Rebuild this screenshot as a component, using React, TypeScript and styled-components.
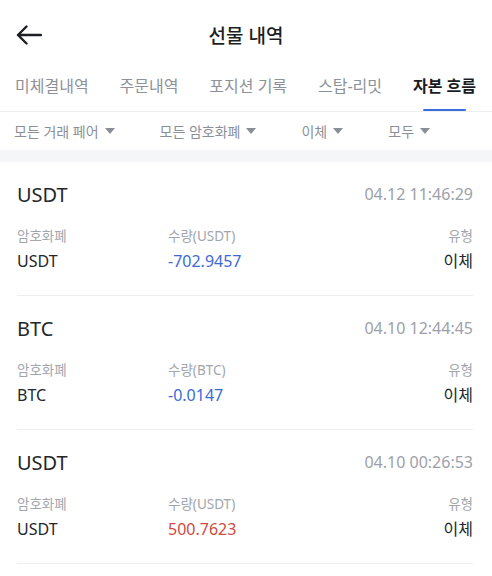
import React from 'react';
import styled, { createGlobalStyle } from 'styled-components';

const GlobalStyle = createGlobalStyle`
    body {
        margin: 0;
        background: #ffffff;
        font-family: "Noto Sans", "Noto Sans CJK KR", sans-serif;
    }
`;

const Page = styled.div`
    width: 492px;
    min-height: 576px;
    background: #ffffff;
`;

const Header = styled.div`
    position: relative;
    height: 70px;
    display: flex;
    align-items: center;
    justify-content: center;
`;

const BackButton = styled.div`
    position: absolute;
    left: 16px;
    top: 23px;
    width: 28px;
    height: 24px;
    display: flex;
    align-items: center;
`;

const Title = styled.div`
    font-size: 19px;
    color: #1c1f23;
    font-weight: 500;
`;

const Tabs = styled.div`
    height: 41px;
    display: flex;
    justify-content: space-between;
    padding: 0 16px 0 15px;
    border-bottom: 1px solid #eeeff1;
`;

const Tab = styled.div<{ $active?: boolean }>`
    position: relative;
    font-size: 16px;
    line-height: 20px;
    padding-top: 6px;
    color: ${(p) => (p.$active ? '#1a1c1f' : '#8d929a')};
    font-weight: ${(p) => (p.$active ? 700 : 400)};
    white-space: nowrap;

    &::after {
        content: '';
        display: ${(p) => (p.$active ? 'block' : 'none')};
        position: absolute;
        left: 50%;
        bottom: 0;
        width: 43px;
        height: 2px;
        margin-left: -21px;
        background: #3b6fe0;
        border-radius: 1px;
    }
`;

const Filters = styled.div`
    height: 38px;
    display: flex;
    align-items: center;
    gap: 45px;
    padding-left: 14px;
`;

const Filter = styled.div`
    display: flex;
    align-items: center;
    gap: 6px;
    font-size: 14px;
    color: #8a8f97;
    white-space: nowrap;
`;

const Caret = styled.span`
    width: 0;
    height: 0;
    border-left: 5px solid transparent;
    border-right: 5px solid transparent;
    border-top: 6px solid #8a8f97;
`;

const Band = styled.div`
    height: 12px;
    background: #f5f6f8;
`;

const Card = styled.div`
    padding: 0 19px 0 17px;
`;

const CardInner = styled.div`
    padding: 22px 0 24px;
    border-bottom: 1px solid #eeeff1;
`;

const TopRow = styled.div`
    display: flex;
    justify-content: space-between;
    align-items: center;
    height: 20px;
`;

const Coin = styled.div`
    font-size: 20px;
    color: #23262b;
`;

const Time = styled.div`
    font-size: 16px;
    color: #9ca1a9;
`;

const Grid = styled.div`
    margin-top: 23px;
    display: grid;
    grid-template-columns: 151px 1fr auto;
    row-gap: 6px;
`;

const Label = styled.div<{ $right?: boolean }>`
    font-size: 13.5px;
    line-height: 18px;
    color: #a1a6ad;
    text-align: ${(p) => (p.$right ? 'right' : 'left')};
`;

const Value = styled.div<{ $tone?: 'blue' | 'red'; $right?: boolean }>`
    font-size: 16px;
    line-height: 20px;
    color: ${(p) => (p.$tone === 'blue' ? '#3b6ad6' : p.$tone === 'red' ? '#cf4a42' : '#23262b')};
    text-align: ${(p) => (p.$right ? 'right' : 'left')};
`;

interface Record {
    coin: string;
    time: string;
    amount: string;
    tone: 'blue' | 'red';
}

const records: Record[] = [
    { coin: 'USDT', time: '04.12 11:46:29', amount: '-702.9457', tone: 'blue' },
    { coin: 'BTC', time: '04.10 12:44:45', amount: '-0.0147', tone: 'blue' },
    { coin: 'USDT', time: '04.10 00:26:53', amount: '500.7623', tone: 'red' },
];

const tabs = ['미체결내역', '주문내역', '포지션 기록', '스탑-리밋', '자본 흐름'];
const filters = ['모든 거래 페어', '모든 암호화폐', '이체', '모두'];

const App = () => {
    return (
        <>
            <GlobalStyle />
            <Page>
                <Header>
                    <BackButton>
                        <svg width="26" height="20" viewBox="0 0 26 20" fill="none">
                            <path d="M25 10H2M10.5 1.5L2 10l8.5 8.5" stroke="#1c1f23" strokeWidth="2.4" strokeLinecap="round" strokeLinejoin="round" />
                        </svg>
                    </BackButton>
                    <Title>선물 내역</Title>
                </Header>
                <Tabs>
                    {tabs.map((t, i) => (
                        <Tab key={t} $active={i === tabs.length - 1}>{t}</Tab>
                    ))}
                </Tabs>
                <Filters>
                    {filters.map((f) => (
                        <Filter key={f}>{f}<Caret /></Filter>
                    ))}
                </Filters>
                <Band />
                {records.map((r, index) => (
                    <Card key={index}>
                        <CardInner>
                            <TopRow>
                                <Coin>{r.coin}</Coin>
                                <Time>{r.time}</Time>
                            </TopRow>
                            <Grid>
                                <Label>암호화폐</Label>
                                <Label>수량({r.coin})</Label>
                                <Label $right>유형</Label>
                                <Value>{r.coin}</Value>
                                <Value $tone={r.tone}>{r.amount}</Value>
                                <Value $right>이체</Value>
                            </Grid>
                        </CardInner>
                    </Card>
                ))}
            </Page>
        </>
    );
};

export default App;
